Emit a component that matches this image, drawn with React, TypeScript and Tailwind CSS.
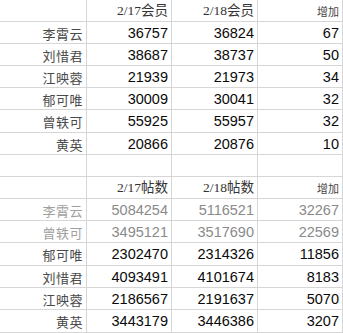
import React from "react";

type Row = { name: string; a: string; b: string; c: string; faded?: boolean };

const sec1: Row[] = [
  { name: "李霄云", a: "36757", b: "36824", c: "67" },
  { name: "刘惜君", a: "38687", b: "38737", c: "50" },
  { name: "江映蓉", a: "21939", b: "21973", c: "34" },
  { name: "郁可唯", a: "30009", b: "30041", c: "32" },
  { name: "曾轶可", a: "55925", b: "55957", c: "32" },
  { name: "黄英", a: "20866", b: "20876", c: "10" },
];

const sec2: Row[] = [
  { name: "李霄云", a: "5084254", b: "5116521", c: "32267", faded: true },
  { name: "曾轶可", a: "3495121", b: "3517690", c: "22569", faded: true },
  { name: "郁可唯", a: "2302470", b: "2314326", c: "11856" },
  { name: "刘惜君", a: "4093491", b: "4101674", c: "8183" },
  { name: "江映蓉", a: "2186567", b: "2191637", c: "5070" },
  { name: "黄英", a: "3443179", b: "3446386", c: "3207" },
];

const cjk = "font-['Noto_Sans_CJK_SC',sans-serif]";
const num = "font-['Liberation_Sans',Arial,sans-serif]";
const hdr = "font-['Liberation_Serif','Noto_Sans_CJK_SC',serif]";

function Cell({ children, className = "" }: { children?: React.ReactNode; className?: string }) {
  return (
    <div className={"flex items-center justify-end border-r border-[#d6d6d6] pr-[3px] pt-[1px] " + className}>
      {children}
    </div>
  );
}

function GridRow({ h, children }: { h: string; children: React.ReactNode }) {
  return (
    <div className={"grid grid-cols-[87px_85px_86px_85px] border-b border-[#d6d6d6] " + h}>{children}</div>
  );
}

function Header({ label1, label2, h }: { label1: string; label2: string; h: string }) {
  return (
    <GridRow h={h}>
      <Cell />
      <Cell className={"text-[13.5px] text-[#333] " + hdr}>{label1}</Cell>
      <Cell className={"text-[13.5px] text-[#333] " + hdr}>{label2}</Cell>
      <Cell className={"text-[11px] text-[#444] " + cjk}>增加</Cell>
    </GridRow>
  );
}

function DataRow({ r, h }: { r: Row; h: string }) {
  const nameC = r.faded ? "text-[#a0a0a0]" : "text-[#4a4a4a]";
  const numC = r.faded ? "text-[#8a8a8a]" : "text-[#0a0a0a]";
  return (
    <GridRow h={h}>
      <Cell className={"text-[13px] tracking-[0.5px] " + cjk + " " + nameC}>{r.name}</Cell>
      <Cell className={"text-[14.5px] " + num + " " + numC}>{r.a}</Cell>
      <Cell className={"text-[14.5px] " + num + " " + numC}>{r.b}</Cell>
      <Cell className={"text-[14.5px] " + num + " " + numC}>{r.c}</Cell>
    </GridRow>
  );
}

export default function App() {
  return (
    <div className="w-[343px] h-[333px] overflow-hidden bg-white">
      <Header label1="2/17会员" label2="2/18会员" h="h-[22px]" />
      {sec1.map((r, i) => (
        <DataRow key={i} r={r} h={i === 4 ? "h-[23px]" : "h-[22px]"} />
      ))}
      <GridRow h="h-[22px]">
        <Cell />
        <Cell />
        <Cell />
        <Cell />
      </GridRow>
      <Header label1="2/17帖数" label2="2/18帖数" h="h-[22px]" />
      {sec2.map((r, i) => (
        <DataRow key={i} r={r} h={i === 2 || i === 5 ? "h-[23px]" : "h-[22px]"} />
      ))}
    </div>
  );
}
